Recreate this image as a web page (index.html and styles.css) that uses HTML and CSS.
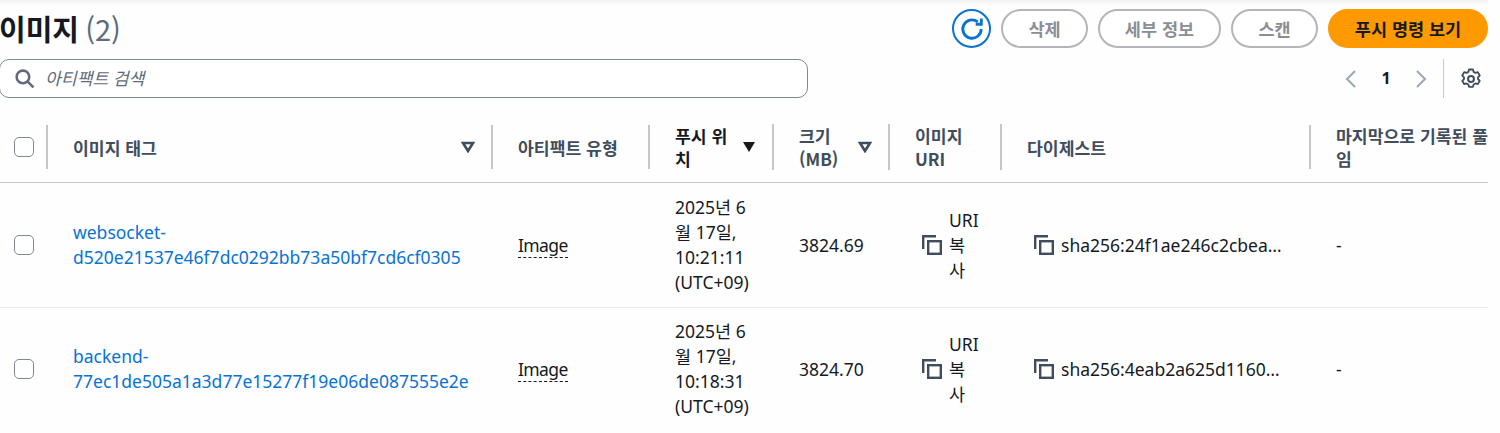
FILE: index.html
```html
<!DOCTYPE html>
<html lang="ko">
<head>
<meta charset="utf-8">
<title>이미지</title>
<link rel="stylesheet" href="styles.css">
</head>
<body>
<div class="page">
  <header class="head">
    <h1 class="title">이미지 <span class="count">(2)</span></h1>
    <div class="actions">
      <button class="icon-btn" aria-label="새로 고침">
        <svg viewBox="0 0 24 24" width="26" height="26" fill="none" stroke="#0972d3" stroke-width="2.6"><path d="M20.5 12a8.5 8.5 0 1 1-3.2-6.6"/><path d="M20.6 2.4v5.2h-5.2" stroke-linejoin="miter"/></svg>
      </button>
      <button class="btn btn-del">삭제</button>
      <button class="btn btn-info">세부 정보</button>
      <button class="btn btn-scan">스캔</button>
      <button class="btn btn-primary">푸시 명령 보기</button>
    </div>
  </header>
  <div class="tools">
    <div class="search">
      <svg viewBox="0 0 20 20" width="21" height="21" fill="none" stroke="#5f6b7a" stroke-width="2.4"><circle cx="8.5" cy="8.5" r="6"/><path d="M13 13l5.5 5.5"/></svg>
      <span class="placeholder">아티팩트 검색</span>
    </div>
    <div class="pager">
      <svg class="chev" viewBox="0 0 12 20" width="12" height="20" fill="none" stroke="#9ba7b6" stroke-width="2"><path d="M10 2L2 10l8 8"/></svg>
      <span class="pageno">1</span>
      <svg class="chev" viewBox="0 0 12 20" width="12" height="20" fill="none" stroke="#9ba7b6" stroke-width="2"><path d="M2 2l8 8-8 8"/></svg>
      <span class="sep"></span>
      <svg class="gear" viewBox="0 0 24 24" width="22" height="22" fill="none" stroke="#414d5c" stroke-width="2.2" stroke-linejoin="round"><path d="M9.6 2.5h4.8l.8 2.9 2.2 1.2 2.9-.8 2.3 4-2.1 2.2v2l2.1 2.2-2.3 4-2.9-.8-2.2 1.2-.8 2.9H9.600l-.8-2.900-2.200-1.200-2.900.8-2.300-4L3.500 14v-2L1.400 9.800l2.300-4 2.900.8 2.200-1.200z" transform="translate(12 12) scale(.9) translate(-12 -14)"/><circle cx="12" cy="12" r="3.200"/></svg>
    </div>
  </div>
  <div class="table-wrap">
    <table class="grid">
      <colgroup>
        <col class="c-check"><col class="c-tag"><col class="c-type"><col class="c-push"><col class="c-size"><col class="c-uri"><col class="c-digest"><col class="c-last">
      </colgroup>
      <thead>
        <tr>
          <th><span class="check"></span></th>
          <th><div class="th-in"><span class="th-text">이미지 태그</span><svg class="sort" viewBox="0 0 14 12" width="14" height="12"><path d="M2 2h10l-5 8z" fill="none" stroke="#414d5c" stroke-width="2.600"/></svg></div></th>
          <th><div class="th-in"><span class="th-text">아티팩트 유형</span></div></th>
          <th class="active"><div class="th-in"><span class="th-text">푸시 위치</span><svg class="sort" viewBox="0 0 14 12" width="14" height="12"><path d="M1 1h12l-6 10z" fill="#16191f"/></svg></div></th>
          <th><div class="th-in"><span class="th-text">크기<br>(MB)</span><svg class="sort" viewBox="0 0 14 12" width="14" height="12"><path d="M2 2h10l-5 8z" fill="none" stroke="#414d5c" stroke-width="2.600"/></svg></div></th>
          <th><div class="th-in"><span class="th-text">이미지<br>URI</span></div></th>
          <th><div class="th-in"><span class="th-text">다이제스트</span></div></th>
          <th class="last"><div class="th-in"><span class="th-text nowrap">마지막으로 기록된 풀<br>임</span></div></th>
        </tr>
      </thead>
      <tbody>
        <tr>
          <td><span class="check"></span></td>
          <td><a class="tag" href="#">websocket-<br>d520e21537e46f7dc0292bb73a50bf7cd6cf0305</a></td>
          <td><span class="dashed">Image</span></td>
          <td><span class="date">2025년 6월 17일, 10:21:11 (UTC+09)</span></td>
          <td>3824.69</td>
          <td><div class="copy copy-uri"><svg viewBox="0 0 20 20" width="20" height="20" fill="none" stroke="#414d5c" stroke-width="2.400"><path d="M1.200 14V1.200H14"/><rect x="6.200" y="6.200" width="12.600" height="12.600"/></svg><span class="copy-text">URI 복사</span></div></td>
          <td><div class="copy copy-digest"><svg viewBox="0 0 20 20" width="20" height="20" fill="none" stroke="#414d5c" stroke-width="2.400"><path d="M1.200 14V1.200H14"/><rect x="6.200" y="6.200" width="12.600" height="12.600"/></svg><span class="digest">sha256:24f1ae246c2cbea…</span></div></td>
          <td class="last">-</td>
        </tr>
        <tr>
          <td><span class="check"></span></td>
          <td><a class="tag" href="#">backend-<br>77ec1de505a1a3d77e15277f19e06de087555e2e</a></td>
          <td><span class="dashed">Image</span></td>
          <td><span class="date">2025년 6월 17일, 10:18:31 (UTC+09)</span></td>
          <td>3824.70</td>
          <td><div class="copy copy-uri"><svg viewBox="0 0 20 20" width="20" height="20" fill="none" stroke="#414d5c" stroke-width="2.400"><path d="M1.200 14V1.200H14"/><rect x="6.200" y="6.200" width="12.600" height="12.600"/></svg><span class="copy-text">URI 복사</span></div></td>
          <td><div class="copy copy-digest"><svg viewBox="0 0 20 20" width="20" height="20" fill="none" stroke="#414d5c" stroke-width="2.400"><path d="M1.200 14V1.200H14"/><rect x="6.200" y="6.200" width="12.600" height="12.600"/></svg><span class="digest">sha256:4eab2a625d1160…</span></div></td>
          <td class="last">-</td>
        </tr>
      </tbody>
    </table>
  </div>
</div>
</body>
</html>
```
FILE: styles.css
```css
html, body {
  margin: 0;
  height: 100%;
  overflow: hidden;
  background: #fefefe;
}
body {
  font-family: "Noto Sans", "Noto Sans CJK KR", sans-serif;
  font-size: 17.5px;
  line-height: 25px;
  color: #16191f;
}
.page {
  width: 1488px;
  height: 433px;
  overflow: hidden;
  background: linear-gradient(#f3f3f3, #fefefe 6px);
}
.head {
  display: flex;
  justify-content: space-between;
  align-items: flex-start;
  padding-top: 9px;
}
.title {
  margin: 0 0 0 -1px;
  font-size: 29px;
  line-height: 39px;
  font-weight: 700;
  font-family: "Noto Sans CJK KR", sans-serif;
}
.count {
  margin-left: -2px;
  font-weight: 400;
  color: #5f6b7a;
}
.actions {
  display: flex;
  gap: 10px;
}
.icon-btn {
  width: 39px;
  height: 39px;
  padding: 0;
  border: 2px solid #0972d3;
  border-radius: 50%;
  background: #fff;
  display: flex;
  align-items: center;
  justify-content: center;
}
.btn {
  height: 39px;
  padding: 0;
  border: 2px solid #b4b4bb;
  border-radius: 20px;
  background: #fff;
  color: #8d8d94;
  font: 700 17.5px/25px "Noto Sans CJK KR", sans-serif;
}
.btn-del, .btn-scan { width: 87px; }
.btn-info { width: 123px; }
.btn-primary {
  width: 160px;
  border-color: #ff9900;
  background: #ff9900;
  color: #16191f;
}
.tools {
  display: flex;
  justify-content: space-between;
  align-items: center;
  margin-top: 11px;
}
.search {
  box-sizing: border-box;
  width: 809px;
  height: 39px;
  margin-left: -1px;
  padding-left: 14px;
  display: flex;
  align-items: center;
  gap: 10px;
  background: #fff;
  border: 1px solid #7d8998;
  border-radius: 10px;
}
.placeholder {
  font-style: italic;
  color: #5f6b7a;
  font-size: 17.2px;
}
.pager {
  display: flex;
  align-items: center;
  height: 39px;
}
.pageno {
  width: 58px;
  text-align: center;
  font-weight: 700;
  font-size: 16px;
}
.sep {
  width: 1px;
  height: 39px;
  margin: 0 16px 0 16px;
  background: #c6c6cd;
}
.gear { margin-right: 6px; }
.table-wrap {
  margin-top: 14px;
  overflow: hidden;
}
.grid {
  table-layout: fixed;
  width: 1540px;
  border-collapse: collapse;
}
.c-check { width: 48px; }
.c-tag { width: 445px; }
.c-type { width: 157px; }
.c-push { width: 124px; }
.c-size { width: 116px; }
.c-uri { width: 112px; }
.c-digest { width: 309px; }
.grid th {
  height: 70px;
  padding: 0;
  text-align: left;
  font-family: "Noto Sans CJK KR", sans-serif;
  font-size: 17.2px;
  line-height: 23px;
  font-weight: 700;
  color: #414d5c;
  border-bottom: 1px solid #c6c6cd;
}
.grid th.active { color: #16191f; }
.th-in {
  box-sizing: border-box;
  display: flex;
  align-items: center;
  justify-content: space-between;
  gap: 10px;
  min-height: 44px;
  padding: 0 16px 0 25px;
  border-right: 2px solid #c6c6cd;
}
.sort { flex: none; }
.last .th-in { border-right: 0; }
.nowrap { white-space: nowrap; }
.grid td {
  height: 125px;
  box-sizing: border-box;
  padding: 0 6px 0 25px;
  vertical-align: middle;
  border-bottom: 1px solid #e9ebed;
}
.grid tbody tr:last-child td {
  height: 123px;
  border-bottom: 0;
}
.grid td:first-child, .grid th:first-child { padding: 0 0 0 14px; }
.grid th:first-child { position: relative; }
.grid th:first-child::after {
  content: "";
  position: absolute;
  right: 0;
  top: 13px;
  width: 2px;
  height: 44px;
  background: #c6c6cd;
}
.check {
  display: block;
  box-sizing: border-box;
  width: 20px;
  height: 20px;
  border: 1.5px solid #7d8998;
  border-radius: 5px;
  background: #fff;
}
.tag {
  color: #0972d3;
  text-decoration: none;
}
.dashed {
  letter-spacing: -0.6px;
  border-bottom: 1px dashed #16191f;
}
.date {
  display: block;
  width: 84px;
}
.copy {
  display: flex;
  align-items: center;
  gap: 7px;
  padding-left: 7px;
}
.copy svg { flex: none; }
.copy-text { width: 28px; }
.digest {
  white-space: nowrap;
}
```
